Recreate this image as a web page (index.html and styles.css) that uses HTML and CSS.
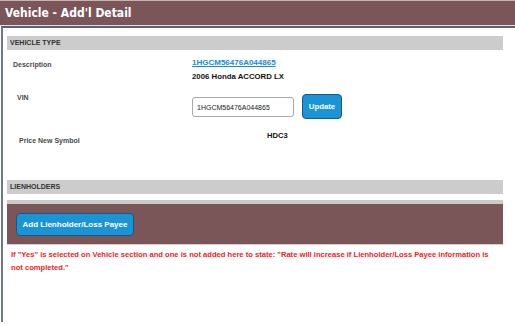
FILE: index.html
```html
<!DOCTYPE html>
<html lang="en">
<head>
    <meta charset="UTF-8">
    <meta name="viewport" content="width=device-width, initial-scale=1.0">
    <title>Vehicle - Add'l Detail</title>
    <link rel="stylesheet" href="styles.css">
</head>
<body>
    <div class="page-header">Vehicle - Add'l Detail</div>
    <div class="frame">
        <div class="section-bar">VEHICLE TYPE</div>

        <div class="row row-desc">
            <div class="label label-desc">Description</div>
            <div class="value">
                <a href="#" class="vin-link">1HGCM56476A044865</a>
                <div class="car-name">2006 Honda ACCORD LX</div>
            </div>
        </div>

        <div class="row row-vin">
            <div class="label label-vin">VIN</div>
            <div class="value vin-group">
                <input type="text" class="vin-input" value="1HGCM56476A044865">
                <button type="button" class="btn btn-update">Update</button>
            </div>
        </div>

        <div class="row row-price">
            <div class="label label-price">Price New Symbol</div>
            <div class="value symbol">HDC3</div>
        </div>

        <div class="section-bar lien-bar">LIENHOLDERS</div>
        <div class="lien-panel">
            <button type="button" class="btn btn-lien">Add Lienholder/Loss Payee</button>
        </div>
        <p class="warning">If "Yes" is selected on Vehicle section and one is not added here to state: "Rate will increase if Lienholder/Loss Payee information is not completed."</p>
    </div>
</body>
</html>
```

FILE: styles.css
```css
body {
    font-family: "Liberation Sans", Arial, Helvetica, sans-serif;
    background-color: #fff;
    margin: 0;
    padding: 0;
}
.page-header {
    height: 24px;
    line-height: 24px;
    padding-left: 5px;
    background-color: #7b5659;
    border-top: 1px solid #c8b4b6;
    border-bottom: 1px solid #e2dcdc;
    color: #fff;
    font-family: "DejaVu Sans Condensed", "DejaVu Sans", sans-serif;
    font-weight: bold;
    font-size: 12px;
}
.frame {
    margin-left: 1px;
    border-left: 2px solid #6f7888;
    border-top: 2px solid #56627a;
    padding: 8px 12px 0 4px;
    height: 296px;
    box-sizing: border-box;
}
.section-bar {
    height: 14px;
    line-height: 14px;
    padding-left: 3px;
    background-color: #cccccc;
    color: #333;
    font-size: 7px;
    font-weight: bold;
}
.row {
    display: flex;
    align-items: flex-start;
}
.label {
    width: 185px;
    flex-shrink: 0;
    box-sizing: border-box;
    color: #4a4a4a;
    font-size: 7px;
    font-weight: bold;
    line-height: 14px;
}
.value {
    font-size: 7.8px;
    font-weight: bold;
    line-height: 14px;
    color: #111;
}
.row-desc {
    margin-top: 6px;
}
.label-desc {
    padding: 2px 0 0 6px;
}
.vin-link {
    color: #1a8ad4;
    text-decoration: underline;
    font-size: 8px;
}
.row-vin {
    margin-top: 10px;
}
.label-vin {
    padding-left: 10px;
    line-height: 8px;
}
.vin-group {
    display: flex;
    align-items: flex-start;
}
.vin-input {
    width: 102px;
    height: 20px;
    margin: 3px 8px 0 0;
    padding: 0 4px;
    box-sizing: border-box;
    border: 1px solid #a9a9a9;
    border-radius: 3px;
    font-family: inherit;
    font-size: 7px;
    color: #222;
}
.btn {
    background-color: #1b94d6;
    color: #fff;
    border: 1px solid #1a5782;
    border-radius: 4px;
    font-family: inherit;
    font-weight: bold;
    cursor: pointer;
    padding: 0;
}
.btn-update {
    width: 40px;
    height: 25px;
    font-size: 7.8px;
}
.row-price {
    margin-top: 10px;
}
.label-price {
    padding: 5px 0 0 12px;
}
.symbol {
    padding-left: 75px;
    font-size: 7.6px;
}
.lien-bar {
    margin-top: 32px;
}
.lien-panel {
    margin-top: 6px;
    background-color: #7b5659;
    border-top: 4px solid #cfc7c8;
    border-bottom: 1px solid #d8d0d0;
    padding: 9px 9px 8px;
}
.btn-lien {
    width: 118px;
    height: 23px;
    font-size: 8px;
}
.warning {
    margin: 3px 0 0;
    padding: 0 6px 0 4px;
    color: #ee1c1c;
    font-size: 7.6px;
    font-weight: bold;
    line-height: 13px;
}
```
